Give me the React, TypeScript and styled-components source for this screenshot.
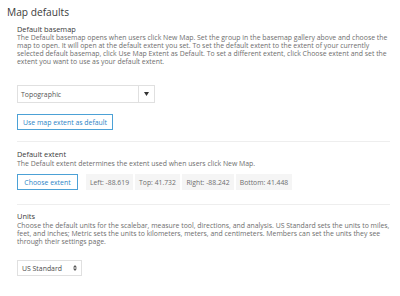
import React from "react";
import styled, { createGlobalStyle } from "styled-components";

const Global = createGlobalStyle`
  html, body { margin: 0; padding: 0; background: #fff; }
  body { font-family: "Open Sans", "Lato", sans-serif; color: #4c4c4c; }
`;

const Page = styled.div`
  width: 400px;
  height: 296px;
  box-sizing: border-box;
  padding: 4px 10px 0 7px;
  overflow: hidden;
`;

const Title = styled.h1`
  margin: 0 0 5px 0;
  font-size: 10.2px;
  font-weight: 400;
  line-height: 16px;
  color: #3b3b3b;
`;

const Section = styled.section`
  padding: 0 0 0 10px;
`;

const Heading = styled.h2`
  margin: 0;
  font-size: 7.4px;
  font-weight: 400;
  line-height: 9px;
  color: #3b3b3b;
`;

const Desc = styled.p<{ $mt: number }>`
  margin: ${(p) => p.$mt}px 0 0 0;
  font-size: 6.9px;
  line-height: 8px;
  color: #6e6e6e;
  white-space: nowrap;
`;

const Divider = styled.hr`
  border: 0;
  border-top: 1px solid #eeeeee;
  margin: 0 0 0 10px;
`;

const SelectBox = styled.div`
  margin-top: 19px;
  width: 138px;
  height: 18px;
  box-sizing: border-box;
  border: 1px solid #e0e0e0;
  display: flex;
  align-items: stretch;
  font-size: 6.9px;
  color: #555;
`;

const SelectText = styled.div`
  flex: 1;
  display: flex;
  align-items: center;
  padding-left: 3px;
`;

const SelectArrow = styled.div`
  width: 15px;
  border-left: 1px solid #e0e0e0;
  display: flex;
  align-items: center;
  justify-content: center;
`;

const OutlineButton = styled.button<{ $w: number }>`
  width: ${(p) => p.$w}px;
  height: 16px;
  box-sizing: border-box;
  padding: 0;
  border: 1px solid #4ca1d6;
  background: #fff;
  color: #2b84c6;
  font-family: inherit;
  font-size: 6.9px;
`;

const Row = styled.div<{ $mt: number }>`
  display: flex;
  align-items: center;
  margin-top: ${(p) => p.$mt}px;
`;

const Chips = styled.div`
  display: flex;
  gap: 2px;
  margin-left: 8px;
`;

const Chip = styled.div<{ $w: number }>`
  width: ${(p) => p.$w}px;
  height: 16px;
  background: #f5f5f5;
  display: flex;
  align-items: center;
  justify-content: center;
  font-size: 6.8px;
  color: #6e6e6e;
`;

const SmallSelect = styled.div`
  margin-top: 14px;
  width: 65px;
  height: 16px;
  box-sizing: border-box;
  border: 1px solid #e0e0e0;
  display: flex;
  align-items: center;
  justify-content: space-between;
  padding: 0 4px 0 4px;
  font-size: 6.9px;
  color: #4c4c4c;
`;

const Spacer = styled.div<{ $h: number }>`
  height: ${(p) => p.$h}px;
`;

export default function App() {
  return (
    <>
      <Global />
      <Page>
        <Title>Map defaults</Title>
        <Section>
          <Heading>Default basemap</Heading>
          <Desc $mt={0}>
            The Default basemap opens when users click New Map. Set the group in the basemap gallery above and choose the
            <br />
            map to open. It will open at the default extent you set. To set the default extent to the extent of your currently
            <br />
            selected default basemap, click Use Map Extent as Default. To set a different extent, click Choose extent and set the
            <br />
            extent you want to use as your default extent.
          </Desc>
          <SelectBox>
            <SelectText>Topographic</SelectText>
            <SelectArrow>
              <svg width="5" height="4" viewBox="0 0 5 4">
                <path d="M0 0 H5 L2.5 4 Z" fill="#333" />
              </svg>
            </SelectArrow>
          </SelectBox>
          <Row $mt={11}>
            <OutlineButton $w={96}>Use map extent as default</OutlineButton>
          </Row>
        </Section>
        <Spacer $h={11} />
        <Divider />
        <Spacer $h={8} />
        <Section>
          <Heading>Default extent</Heading>
          <Desc $mt={1}>The Default extent determines the extent used when users click New Map.</Desc>
          <Row $mt={6}>
            <OutlineButton $w={61}>Choose extent</OutlineButton>
            <Chips>
              <Chip $w={47}>Left: -88.619</Chip>
              <Chip $w={45}>Top: 41.732</Chip>
              <Chip $w={52}>Right: -88.242</Chip>
              <Chip $w={56}>Bottom: 41.448</Chip>
            </Chips>
          </Row>
        </Section>
        <Spacer $h={14} />
        <Divider />
        <Spacer $h={7} />
        <Section>
          <Heading>Units</Heading>
          <Desc $mt={1}>
            Choose the default units for the scalebar, measure tool, directions, and analysis. US Standard sets the units to miles,
            <br />
            feet, and inches; Metric sets the units to kilometers, meters, and centimeters. Members can set the units they see
            <br />
            through their settings page.
          </Desc>
          <SmallSelect>
            <span>US Standard</span>
            <svg width="4" height="6" viewBox="0 0 4 6">
              <path d="M0 2.4 L2 0 L4 2.4 Z M0 3.6 L2 6 L4 3.6 Z" fill="#555" />
            </svg>
          </SmallSelect>
        </Section>
      </Page>
    </>
  );
}
